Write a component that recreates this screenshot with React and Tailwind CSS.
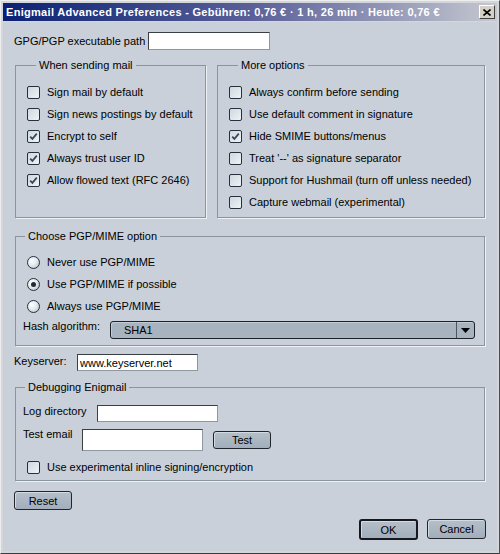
import React from "react";

const Check = ({ checked }) => (
  <span className="w-[13px] h-[13px] shrink-0 rounded-[2px] border border-[#27313b] bg-gradient-to-br from-[#cfd9e1] to-[#eef3f6] flex items-center justify-center">
    {checked && (
      <svg width="9" height="9" viewBox="0 0 9 9">
        <path d="M1.2 4.6 L3.4 6.9 L7.8 1.6" stroke="#3b4652" strokeWidth="1.7" fill="none" />
      </svg>
    )}
  </span>
);

const Radio = ({ checked }) => (
  <span className="w-[13px] h-[13px] shrink-0 rounded-full border border-[#27313b] bg-[radial-gradient(circle_at_35%_35%,#ffffff_0%,#e4ebf0_45%,#aab6c1_100%)] flex items-center justify-center">
    {checked && <span className="w-[5px] h-[5px] rounded-full bg-[#222a32]" />}
  </span>
);

const CheckRow = ({ checked, children }) => (
  <div className="h-[22px] flex items-center gap-[7px]">
    <Check checked={checked} />
    <span>{children}</span>
  </div>
);

const RadioRow = ({ checked, children }) => (
  <div className="h-[22px] flex items-center gap-[7px]">
    <Radio checked={checked} />
    <span>{children}</span>
  </div>
);

const Box = ({ title, className = "", children }) => (
  <fieldset className={"border border-[#8b959f] shadow-[1px_1px_0_#eef2f5] min-w-0 " + className}>
    <legend className="ml-[9px] px-[3px] leading-[14px]">{title}</legend>
    {children}
  </fieldset>
);

const Input = ({ className = "", value = "" }) => (
  <div className={"bg-white border border-t-[#3a3f44] border-l-[#3a3f44] border-r-[#8f98a1] border-b-[#8f98a1] flex items-center pl-[2px] " + className}>
    {value}
  </div>
);

const Btn = ({ className = "", children, def = false }) => (
  <div
    className={
      "flex items-center justify-center rounded-[3px] bg-gradient-to-b from-[#b4bfca] to-[#a2aebb] shadow-[inset_1px_1px_0_#d2dae2] " +
      (def ? "border-2 border-[#15191d] " : "border border-[#20262c] ") +
      className
    }
  >
    {children}
  </div>
);

export default function App() {
  return (
    <div className="w-[500px] h-[554px] flex flex-col bg-[#d4d6d9] border-t border-l border-[#eceef0] border-r-[#4a4d50] border-b-[#3a3d40] border-r border-b p-[2px] font-['Liberation_Sans',sans-serif] text-[11px] text-black leading-[14px]">
      <div className="h-[18px] shrink-0 flex items-center justify-between bg-gradient-to-r from-[#0a1f74] via-[#5a5f98] to-[#c6c8cf] pl-[3px] pr-[2px]">
        <span className="text-white font-bold text-[11px] tracking-[0.3px] whitespace-nowrap">
          Enigmail Advanced Preferences - Gebühren: 0,76 € · 1 h, 26 min · Heute: 0,76 €
        </span>
        <div className="w-[16px] h-[14px] bg-[#d4d0c8] border border-t-white border-l-white border-r-[#404040] border-b-[#404040] flex items-center justify-center">
          <svg width="8" height="7" viewBox="0 0 8 7">
            <path d="M0.5 0.5 L7.5 6.5 M7.5 0.5 L0.5 6.5" stroke="#000" strokeWidth="1.6" />
          </svg>
        </div>
      </div>
      <div className="flex-1 mt-[1px] bg-[#c9d0d9] pl-[11px] pr-[12px] flex flex-col">
        <div className="mt-[10px] h-[18px] flex items-center">
          <span className="w-[134px]">GPG/PGP executable path</span>
          <Input className="w-[122px] h-[18px]" />
        </div>

        <div className="mt-[8px] ml-px flex gap-[11px]">
          <Box title="When sending mail" className="w-[191px] pl-[11px] pt-[9px]">
            <CheckRow>Sign mail by default</CheckRow>
            <CheckRow>Sign news postings by default</CheckRow>
            <CheckRow checked>Encrypt to self</CheckRow>
            <CheckRow checked>Always trust user ID</CheckRow>
            <CheckRow checked>Allow flowed text (RFC 2646)</CheckRow>
          </Box>
          <Box title="More options" className="flex-1 pl-[11px] pt-[9px] pb-[4px]">
            <CheckRow>Always confirm before sending</CheckRow>
            <CheckRow>Use default comment in signature</CheckRow>
            <CheckRow checked>Hide SMIME buttons/menus</CheckRow>
            <CheckRow>Treat '--' as signature separator</CheckRow>
            <CheckRow>Support for Hushmail (turn off unless needed)</CheckRow>
            <CheckRow>Capture webmail (experimental)</CheckRow>
          </Box>
        </div>

        <Box title="Choose PGP/MIME option" className="mt-[11px] ml-px pt-[8px] pb-[6px]">
          <div className="pl-[11px]">
            <RadioRow>Never use PGP/MIME</RadioRow>
            <RadioRow checked>Use PGP/MIME if possible</RadioRow>
            <RadioRow>Always use PGP/MIME</RadioRow>
          </div>
          <div className="mt-[4px] pl-[7px] pr-[9px] flex items-start">
            <span className="w-[87px] -mt-[2px]">Hash algorithm:</span>
            <div className="flex-1 h-[18px] flex rounded-[3px] border border-[#1d2227] bg-[#a7b3bf] shadow-[inset_1px_1px_0_#c3ccd5]">
              <span className="flex-1 flex items-center pl-[13px]">SHA1</span>
              <span className="w-[18px] border-l border-[#4d5660] flex items-center justify-center">
                <svg width="9" height="5" viewBox="0 0 9 5">
                  <path d="M0 0 H9 L4.5 5 Z" fill="#000" />
                </svg>
              </span>
            </div>
          </div>
        </Box>

        <div className="mt-[8px] h-[17px] flex items-center">
          <span className="w-[63px] -mt-[3px]">Keyserver:</span>
          <Input className="w-[121px] h-[17px]" value="www.keyserver.net" />
        </div>

        <Box title="Debugging Enigmail" className="mt-[9px] ml-px pt-[11px] pb-[2px]">
          <div className="pl-[7px] h-[17px] flex items-start">
            <span className="w-[74px] -mt-[1px]">Log directory</span>
            <Input className="w-[121px] h-[17px]" />
          </div>
          <div className="mt-[7px] pl-[7px] flex items-start">
            <span className="w-[59px] -mt-[2px]">Test email</span>
            <Input className="w-[121px] h-[22px]" />
            <Btn className="ml-[10px] mt-[2px] w-[58px] h-[18px]">Test</Btn>
          </div>
          <div className="mt-[5px] pl-[11px]">
            <CheckRow>Use experimental inline signing/encryption</CheckRow>
          </div>
        </Box>

        <Btn className="mt-[10px] w-[58px] h-[19px]">Reset</Btn>

        <div className="mt-[9px] flex justify-end gap-[9px] -mr-px">
          <Btn def className="w-[59px] h-[21px]">OK</Btn>
          <Btn className="w-[59px] h-[20px]">Cancel</Btn>
        </div>
      </div>
    </div>
  );
}
